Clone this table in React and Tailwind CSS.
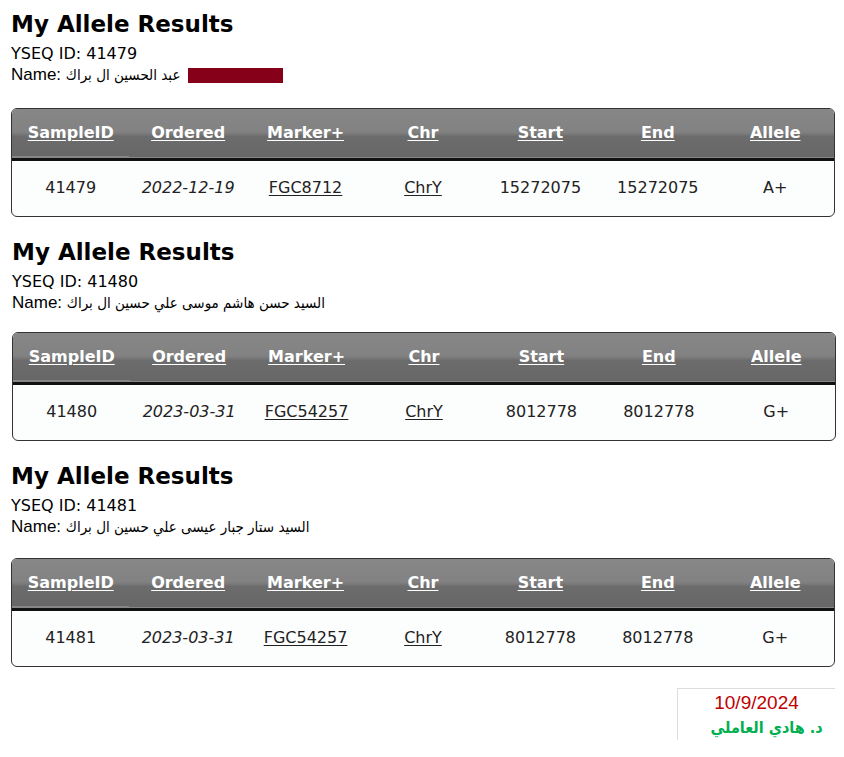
const results = [
  {
    id: '41479',
    name: 'عبد الحسين ال براك',
    redacted: true,
    ordered: '2022-12-19',
    marker: 'FGC8712',
    start: '15272075',
    end: '15272075',
    allele: 'A+',
    box: 'pl-[11px] pr-[9px] pt-[10px]',
    gap: 'mt-[22px]',
  },
  {
    id: '41480',
    name: 'السيد حسن هاشم موسى علي حسين ال براك',
    ordered: '2023-03-31',
    marker: 'FGC54257',
    start: '8012778',
    end: '8012778',
    allele: 'G+',
    box: 'pl-[12px] pr-[8px] pt-[21px]',
    gap: 'mt-[18px]',
  },
  {
    id: '41481',
    name: 'السيد ستار جبار عيسى علي حسين ال براك',
    ordered: '2023-03-31',
    marker: 'FGC54257',
    start: '8012778',
    end: '8012778',
    allele: 'G+',
    box: 'pl-[11px] pr-[9px] pt-[21px]',
    gap: 'mt-[20px]',
  },
];

const cols = ['SampleID', 'Ordered', 'Marker+', 'Chr', 'Start', 'End', 'Allele'];

const ResultBlock = ({ r }) => (
  <section className={`${r.box} font-['DejaVu_Sans',sans-serif] text-black`}>
    <h1 className="text-[23px] font-bold leading-[28px]">My Allele Results</h1>
    <p className="text-[16px] leading-[20px] mt-[6px]">YSEQ ID: {r.id}</p>
    <p className="h-[22px] flex items-center">
      <span className="text-[17px] font-['Liberation_Sans',sans-serif]">Name:&nbsp;</span>
      <span dir="rtl" className="text-[15px] font-['DejaVu_Sans_Condensed','DejaVu_Sans',sans-serif]">
        {r.name}
      </span>
      {r.redacted && <span className="ml-[8px] inline-block w-[95px] h-[15px] bg-[#850018]" />}
    </p>

    <div className={`${r.gap} border border-[#333] rounded-[6px] overflow-hidden bg-[#fcfdfd]`}>
      <table className="w-full table-fixed border-collapse">
        <thead>
          <tr className="h-[50px] bg-[linear-gradient(to_bottom,#878787_0%,#828282_48%,#7a7a7a_53%,#6c6c6c_58%,#676767_100%)] border-b-[3px] border-[#111]">
            {cols.map((c) => (
              <th key={c} className="text-white text-[16px] font-bold underline underline-offset-2 text-center">
                {c}
              </th>
            ))}
          </tr>
        </thead>
        <tbody>
          <tr className="h-[57px] text-[16px] text-[#222]">
            <td className="text-center">{r.id}</td>
            <td className="text-center italic">{r.ordered}</td>
            <td className="text-center underline underline-offset-2">{r.marker}</td>
            <td className="text-center underline underline-offset-2">ChrY</td>
            <td className="text-center">{r.start}</td>
            <td className="text-center">{r.end}</td>
            <td className="text-center">{r.allele}</td>
          </tr>
        </tbody>
      </table>
    </div>
  </section>
);

export default function App() {
  return (
    <div className="w-[844px] min-h-[757px] bg-white">
      {results.map((r) => (
        <ResultBlock key={r.id} r={r} />
      ))}
      <div className="flex justify-end pr-[9px] mt-[21px]">
        <div className="w-[158px] h-[52px] border-l border-t border-[#ddd] flex flex-col items-center pt-[2px]">
          <span className="text-[#c00000] text-[19px] leading-[24px] font-['Liberation_Sans',sans-serif]">10/9/2024</span>
          <span dir="rtl" className="pl-[20px] text-[#00b050] text-[16px] font-bold leading-[26px] font-['DejaVu_Sans_Condensed','DejaVu_Sans',sans-serif]">
            د. هادي العاملي
          </span>
        </div>
      </div>
    </div>
  );
}
